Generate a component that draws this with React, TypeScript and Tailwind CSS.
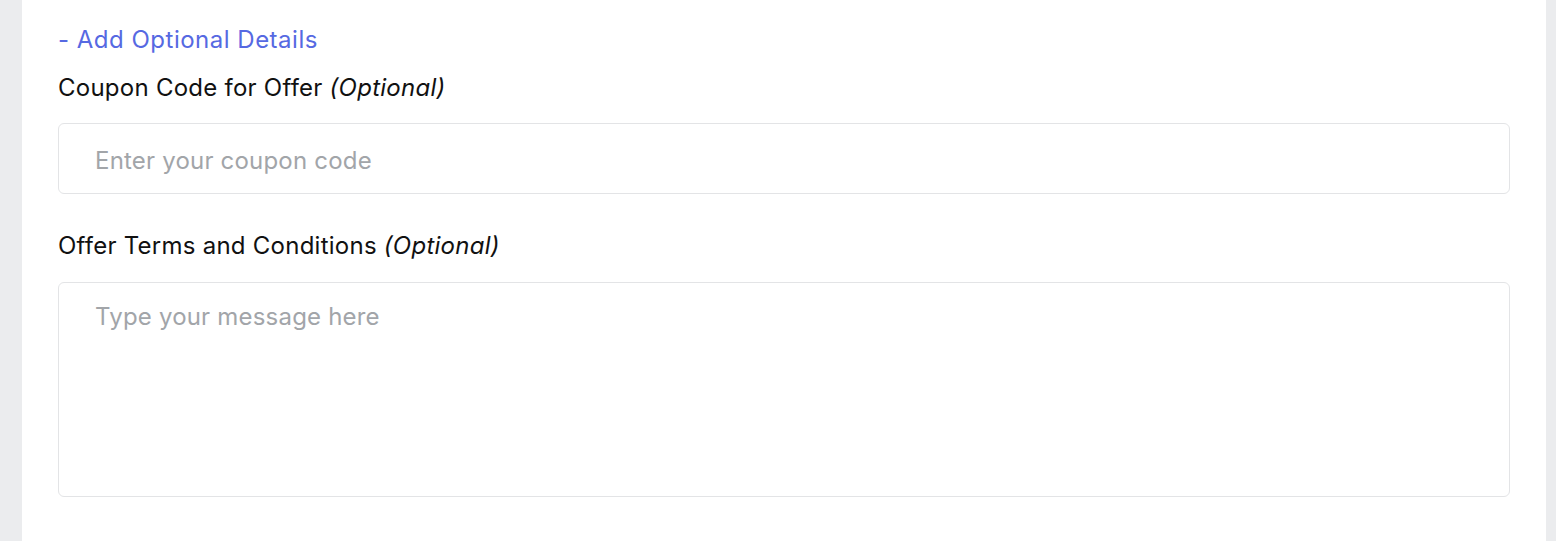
export default function App() {
  return (
    <div className="min-h-[541px] bg-[#ebecee] px-[22px] pr-[10px] font-['Inter',sans-serif]">
      <div className="min-h-[541px] bg-white px-9 pt-[25px]">
        <button className="text-[24px] leading-[30px] tracking-[0.5px] text-[#5669e2]">- Add Optional Details</button>
        <label className="mt-[18px] block text-[24px] leading-[30px] tracking-[0.25px] text-[#111]">
          Coupon Code for Offer <em className="italic">(Optional)</em>
        </label>
        <input
          className="mt-[20px] block h-[71px] w-full rounded-md border border-[#e3e4e6] px-9 pt-[3px] text-[24px] tracking-[0.2px] text-[#111] placeholder:text-[#a2a5a9] outline-none"
          placeholder="Enter your coupon code"
        />
        <label className="mt-[37px] block text-[24px] leading-[30px] tracking-[0.25px] text-[#111]">
          Offer Terms and Conditions <em className="italic">(Optional)</em>
        </label>
        <textarea
          className="mt-[21px] block h-[215px] w-full resize-none rounded-md border border-[#e3e4e6] px-9 pt-[19px] pb-[18px] text-[24px] leading-[30px] tracking-[0.2px] text-[#111] placeholder:text-[#a2a5a9] outline-none"
          placeholder="Type your message here"
        />
      </div>
    </div>
  );
}
